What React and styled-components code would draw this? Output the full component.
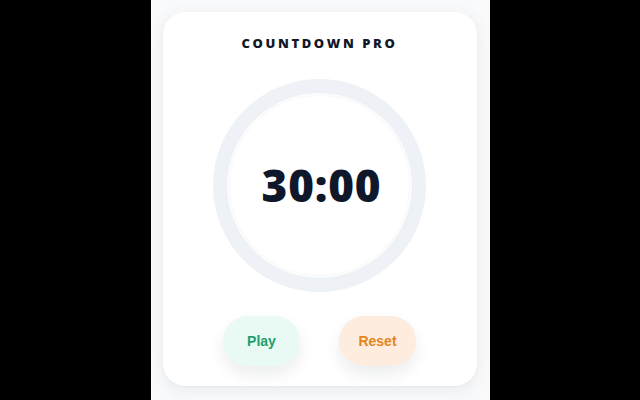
import React, { useState } from "react"
import styled, { createGlobalStyle } from "styled-components"

const GlobalStyle = createGlobalStyle`
  html, body {
    margin: 0;
    padding: 0;
    background: #000;
  }
  body {
    font-family: "Open Sans", "Liberation Sans", sans-serif;
  }
`

const pad = n => String(n).padStart(2, "0")

const App = () => {
  const [seconds, setSeconds] = useState(30 * 60)
  const [running, setRunning] = useState(false)

  const time = `${pad(Math.floor(seconds / 60))}:${pad(seconds % 60)}`

  return (
    <>
      <GlobalStyle />
      <Frame>
        <Card>
          <Title>Countdown Pro</Title>
          <Ring>
            <Face>
              <Time>{time}</Time>
            </Face>
          </Ring>
          <Controls>
            <PillButton tone="play" onClick={() => setRunning(!running)}>
              {running ? "Pause" : "Play"}
            </PillButton>
            <PillButton
              tone="reset"
              onClick={() => {
                setRunning(false)
                setSeconds(30 * 60)
              }}
            >
              Reset
            </PillButton>
          </Controls>
        </Card>
      </Frame>
    </>
  )
}

// phone-sized column in the middle of the page
const Frame = styled.div`
  width: 339px;
  min-height: 100vh;
  margin: 0 auto;
  padding: 12px 13px 14px 12px;
  box-sizing: border-box;
  background: #f9fafb;
`

const Card = styled.div`
  display: flex;
  flex-direction: column;
  align-items: center;
  height: 374px;
  box-sizing: border-box;
  padding: 22px 0 0;
  background: #fff;
  border-radius: 22px;
  box-shadow: 0 4px 18px rgba(15, 23, 42, 0.07), 0 1px 3px rgba(15, 23, 42, 0.04);
`

const Title = styled.h1`
  margin: 0;
  font-family: "Open Sans", sans-serif;
  font-size: 13px;
  line-height: 18px;
  font-weight: 800;
  letter-spacing: 2.6px;
  text-transform: uppercase;
  color: #111827;
`

const Ring = styled.div`
  display: flex;
  align-items: center;
  justify-content: center;
  width: 213px;
  height: 213px;
  margin-top: 27px;
  box-sizing: border-box;
  border: 14px solid #eef1f6;
  border-radius: 50%;
`

const Face = styled.div`
  display: flex;
  align-items: center;
  justify-content: center;
  width: 179px;
  height: 179px;
  border-radius: 50%;
  background: #fff;
  box-shadow: 0 0 6px rgba(15, 23, 42, 0.05);
`

const Time = styled.div`
  font-family: "Open Sans", sans-serif;
  font-size: 44px;
  font-weight: 800;
  color: #0f172a;
  letter-spacing: 0.8px;
  margin: -2px 0 0 4px;
`

const Controls = styled.div`
  display: flex;
  gap: 39px;
  margin-top: 24px;
`

const tones = {
  play: { bg: "#e9f9f3", fg: "#1f9f6e" },
  reset: { bg: "#feecdf", fg: "#e2851c" },
}

const PillButton = styled.button`
  width: 77px;
  height: 50px;
  border: none;
  border-radius: 25px;
  background: ${({ tone }) => tones[tone].bg};
  color: ${({ tone }) => tones[tone].fg};
  font-family: "Liberation Sans", Arial, sans-serif;
  font-size: 14px;
  font-weight: 700;
  cursor: pointer;
  box-shadow: 0 8px 16px rgba(15, 23, 42, 0.08);
`

export default App
